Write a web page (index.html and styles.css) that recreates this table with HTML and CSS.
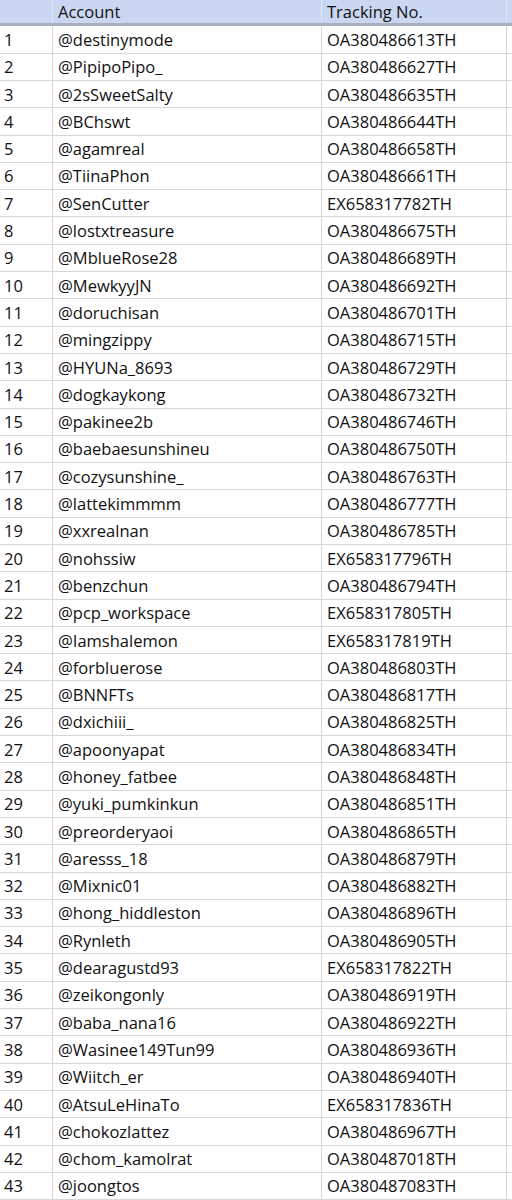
FILE: index.html
```html
<!DOCTYPE html>
<html>
<head>
<meta charset="utf-8">
<link rel="stylesheet" href="styles.css">
</head>
<body>
<div class="sheet">
  <div class="row head"><div class="c n"></div><div class="c a">Account</div><div class="c t">Tracking No.</div><div class="c x"></div></div>
  <div class="row"><div class="c n">1</div><div class="c a">@destinymode</div><div class="c t">OA380486613TH</div><div class="c x"></div></div>
  <div class="row"><div class="c n">2</div><div class="c a">@PipipoPipo_</div><div class="c t">OA380486627TH</div><div class="c x"></div></div>
  <div class="row"><div class="c n">3</div><div class="c a">@2sSweetSalty</div><div class="c t">OA380486635TH</div><div class="c x"></div></div>
  <div class="row"><div class="c n">4</div><div class="c a">@BChswt</div><div class="c t">OA380486644TH</div><div class="c x"></div></div>
  <div class="row"><div class="c n">5</div><div class="c a">@agamreal</div><div class="c t">OA380486658TH</div><div class="c x"></div></div>
  <div class="row"><div class="c n">6</div><div class="c a">@TiinaPhon</div><div class="c t">OA380486661TH</div><div class="c x"></div></div>
  <div class="row"><div class="c n">7</div><div class="c a">@SenCutter</div><div class="c t">EX658317782TH</div><div class="c x"></div></div>
  <div class="row"><div class="c n">8</div><div class="c a">@lostxtreasure</div><div class="c t">OA380486675TH</div><div class="c x"></div></div>
  <div class="row"><div class="c n">9</div><div class="c a">@MblueRose28</div><div class="c t">OA380486689TH</div><div class="c x"></div></div>
  <div class="row"><div class="c n">10</div><div class="c a">@MewkyyJN</div><div class="c t">OA380486692TH</div><div class="c x"></div></div>
  <div class="row"><div class="c n">11</div><div class="c a">@doruchisan</div><div class="c t">OA380486701TH</div><div class="c x"></div></div>
  <div class="row"><div class="c n">12</div><div class="c a">@mingzippy</div><div class="c t">OA380486715TH</div><div class="c x"></div></div>
  <div class="row"><div class="c n">13</div><div class="c a">@HYUNa_8693</div><div class="c t">OA380486729TH</div><div class="c x"></div></div>
  <div class="row"><div class="c n">14</div><div class="c a">@dogkaykong</div><div class="c t">OA380486732TH</div><div class="c x"></div></div>
  <div class="row"><div class="c n">15</div><div class="c a">@pakinee2b</div><div class="c t">OA380486746TH</div><div class="c x"></div></div>
  <div class="row"><div class="c n">16</div><div class="c a">@baebaesunshineu</div><div class="c t">OA380486750TH</div><div class="c x"></div></div>
  <div class="row"><div class="c n">17</div><div class="c a">@cozysunshine_</div><div class="c t">OA380486763TH</div><div class="c x"></div></div>
  <div class="row"><div class="c n">18</div><div class="c a">@lattekimmmm</div><div class="c t">OA380486777TH</div><div class="c x"></div></div>
  <div class="row"><div class="c n">19</div><div class="c a">@xxrealnan</div><div class="c t">OA380486785TH</div><div class="c x"></div></div>
  <div class="row"><div class="c n">20</div><div class="c a">@nohssiw</div><div class="c t">EX658317796TH</div><div class="c x"></div></div>
  <div class="row"><div class="c n">21</div><div class="c a">@benzchun</div><div class="c t">OA380486794TH</div><div class="c x"></div></div>
  <div class="row"><div class="c n">22</div><div class="c a">@pcp_workspace</div><div class="c t">EX658317805TH</div><div class="c x"></div></div>
  <div class="row"><div class="c n">23</div><div class="c a">@Iamshalemon</div><div class="c t">EX658317819TH</div><div class="c x"></div></div>
  <div class="row"><div class="c n">24</div><div class="c a">@forbluerose</div><div class="c t">OA380486803TH</div><div class="c x"></div></div>
  <div class="row"><div class="c n">25</div><div class="c a">@BNNFTs</div><div class="c t">OA380486817TH</div><div class="c x"></div></div>
  <div class="row"><div class="c n">26</div><div class="c a">@dxichiii_</div><div class="c t">OA380486825TH</div><div class="c x"></div></div>
  <div class="row"><div class="c n">27</div><div class="c a">@apoonyapat</div><div class="c t">OA380486834TH</div><div class="c x"></div></div>
  <div class="row"><div class="c n">28</div><div class="c a">@honey_fatbee</div><div class="c t">OA380486848TH</div><div class="c x"></div></div>
  <div class="row"><div class="c n">29</div><div class="c a">@yuki_pumkinkun</div><div class="c t">OA380486851TH</div><div class="c x"></div></div>
  <div class="row"><div class="c n">30</div><div class="c a">@preorderyaoi</div><div class="c t">OA380486865TH</div><div class="c x"></div></div>
  <div class="row"><div class="c n">31</div><div class="c a">@aresss_18</div><div class="c t">OA380486879TH</div><div class="c x"></div></div>
  <div class="row"><div class="c n">32</div><div class="c a">@Mixnic01</div><div class="c t">OA380486882TH</div><div class="c x"></div></div>
  <div class="row"><div class="c n">33</div><div class="c a">@hong_hiddleston</div><div class="c t">OA380486896TH</div><div class="c x"></div></div>
  <div class="row"><div class="c n">34</div><div class="c a">@Rynleth</div><div class="c t">OA380486905TH</div><div class="c x"></div></div>
  <div class="row"><div class="c n">35</div><div class="c a">@dearagustd93</div><div class="c t">EX658317822TH</div><div class="c x"></div></div>
  <div class="row"><div class="c n">36</div><div class="c a">@zeikongonly</div><div class="c t">OA380486919TH</div><div class="c x"></div></div>
  <div class="row"><div class="c n">37</div><div class="c a">@baba_nana16</div><div class="c t">OA380486922TH</div><div class="c x"></div></div>
  <div class="row"><div class="c n">38</div><div class="c a">@Wasinee149Tun99</div><div class="c t">OA380486936TH</div><div class="c x"></div></div>
  <div class="row"><div class="c n">39</div><div class="c a">@Wiitch_er</div><div class="c t">OA380486940TH</div><div class="c x"></div></div>
  <div class="row"><div class="c n">40</div><div class="c a">@AtsuLeHinaTo</div><div class="c t">EX658317836TH</div><div class="c x"></div></div>
  <div class="row"><div class="c n">41</div><div class="c a">@chokozlattez</div><div class="c t">OA380486967TH</div><div class="c x"></div></div>
  <div class="row"><div class="c n">42</div><div class="c a">@chom_kamolrat</div><div class="c t">OA380487018TH</div><div class="c x"></div></div>
  <div class="row"><div class="c n">43</div><div class="c a">@joongtos</div><div class="c t">OA380487083TH</div><div class="c x"></div></div>
</div>
</body>
</html>
```
FILE: styles.css
```css
html, body {
  margin: 0;
  padding: 0;
  background: #ffffff;
}
.sheet {
  width: 512px;
  font-family: "Open Sans", "Noto Sans", sans-serif;
  font-size: 16.5px;
  color: #111111;
}
.row {
  display: grid;
  grid-template-columns: 53px 269px 185px 1fr;
  height: 27.3px;
  box-sizing: border-box;
  border-bottom: 1px solid #d6d6d6;
}
.c {
  display: flex;
  align-items: center;
  padding-left: 5px;
  border-right: 1px solid #d6d6d6;
  white-space: nowrap;
  overflow: hidden;
}
.c.n {
  padding-left: 4px;
}
.c.x {
  border-right: none;
}
.row.head {
  height: 26.35px;
  background: #c9d7f2;
  border-bottom: 3px solid #a8b0bc;
}
.row.head .c {
  border-right-color: #dfe6f3;
}
.row.head .c.x {
  border-right: none;
}
```
